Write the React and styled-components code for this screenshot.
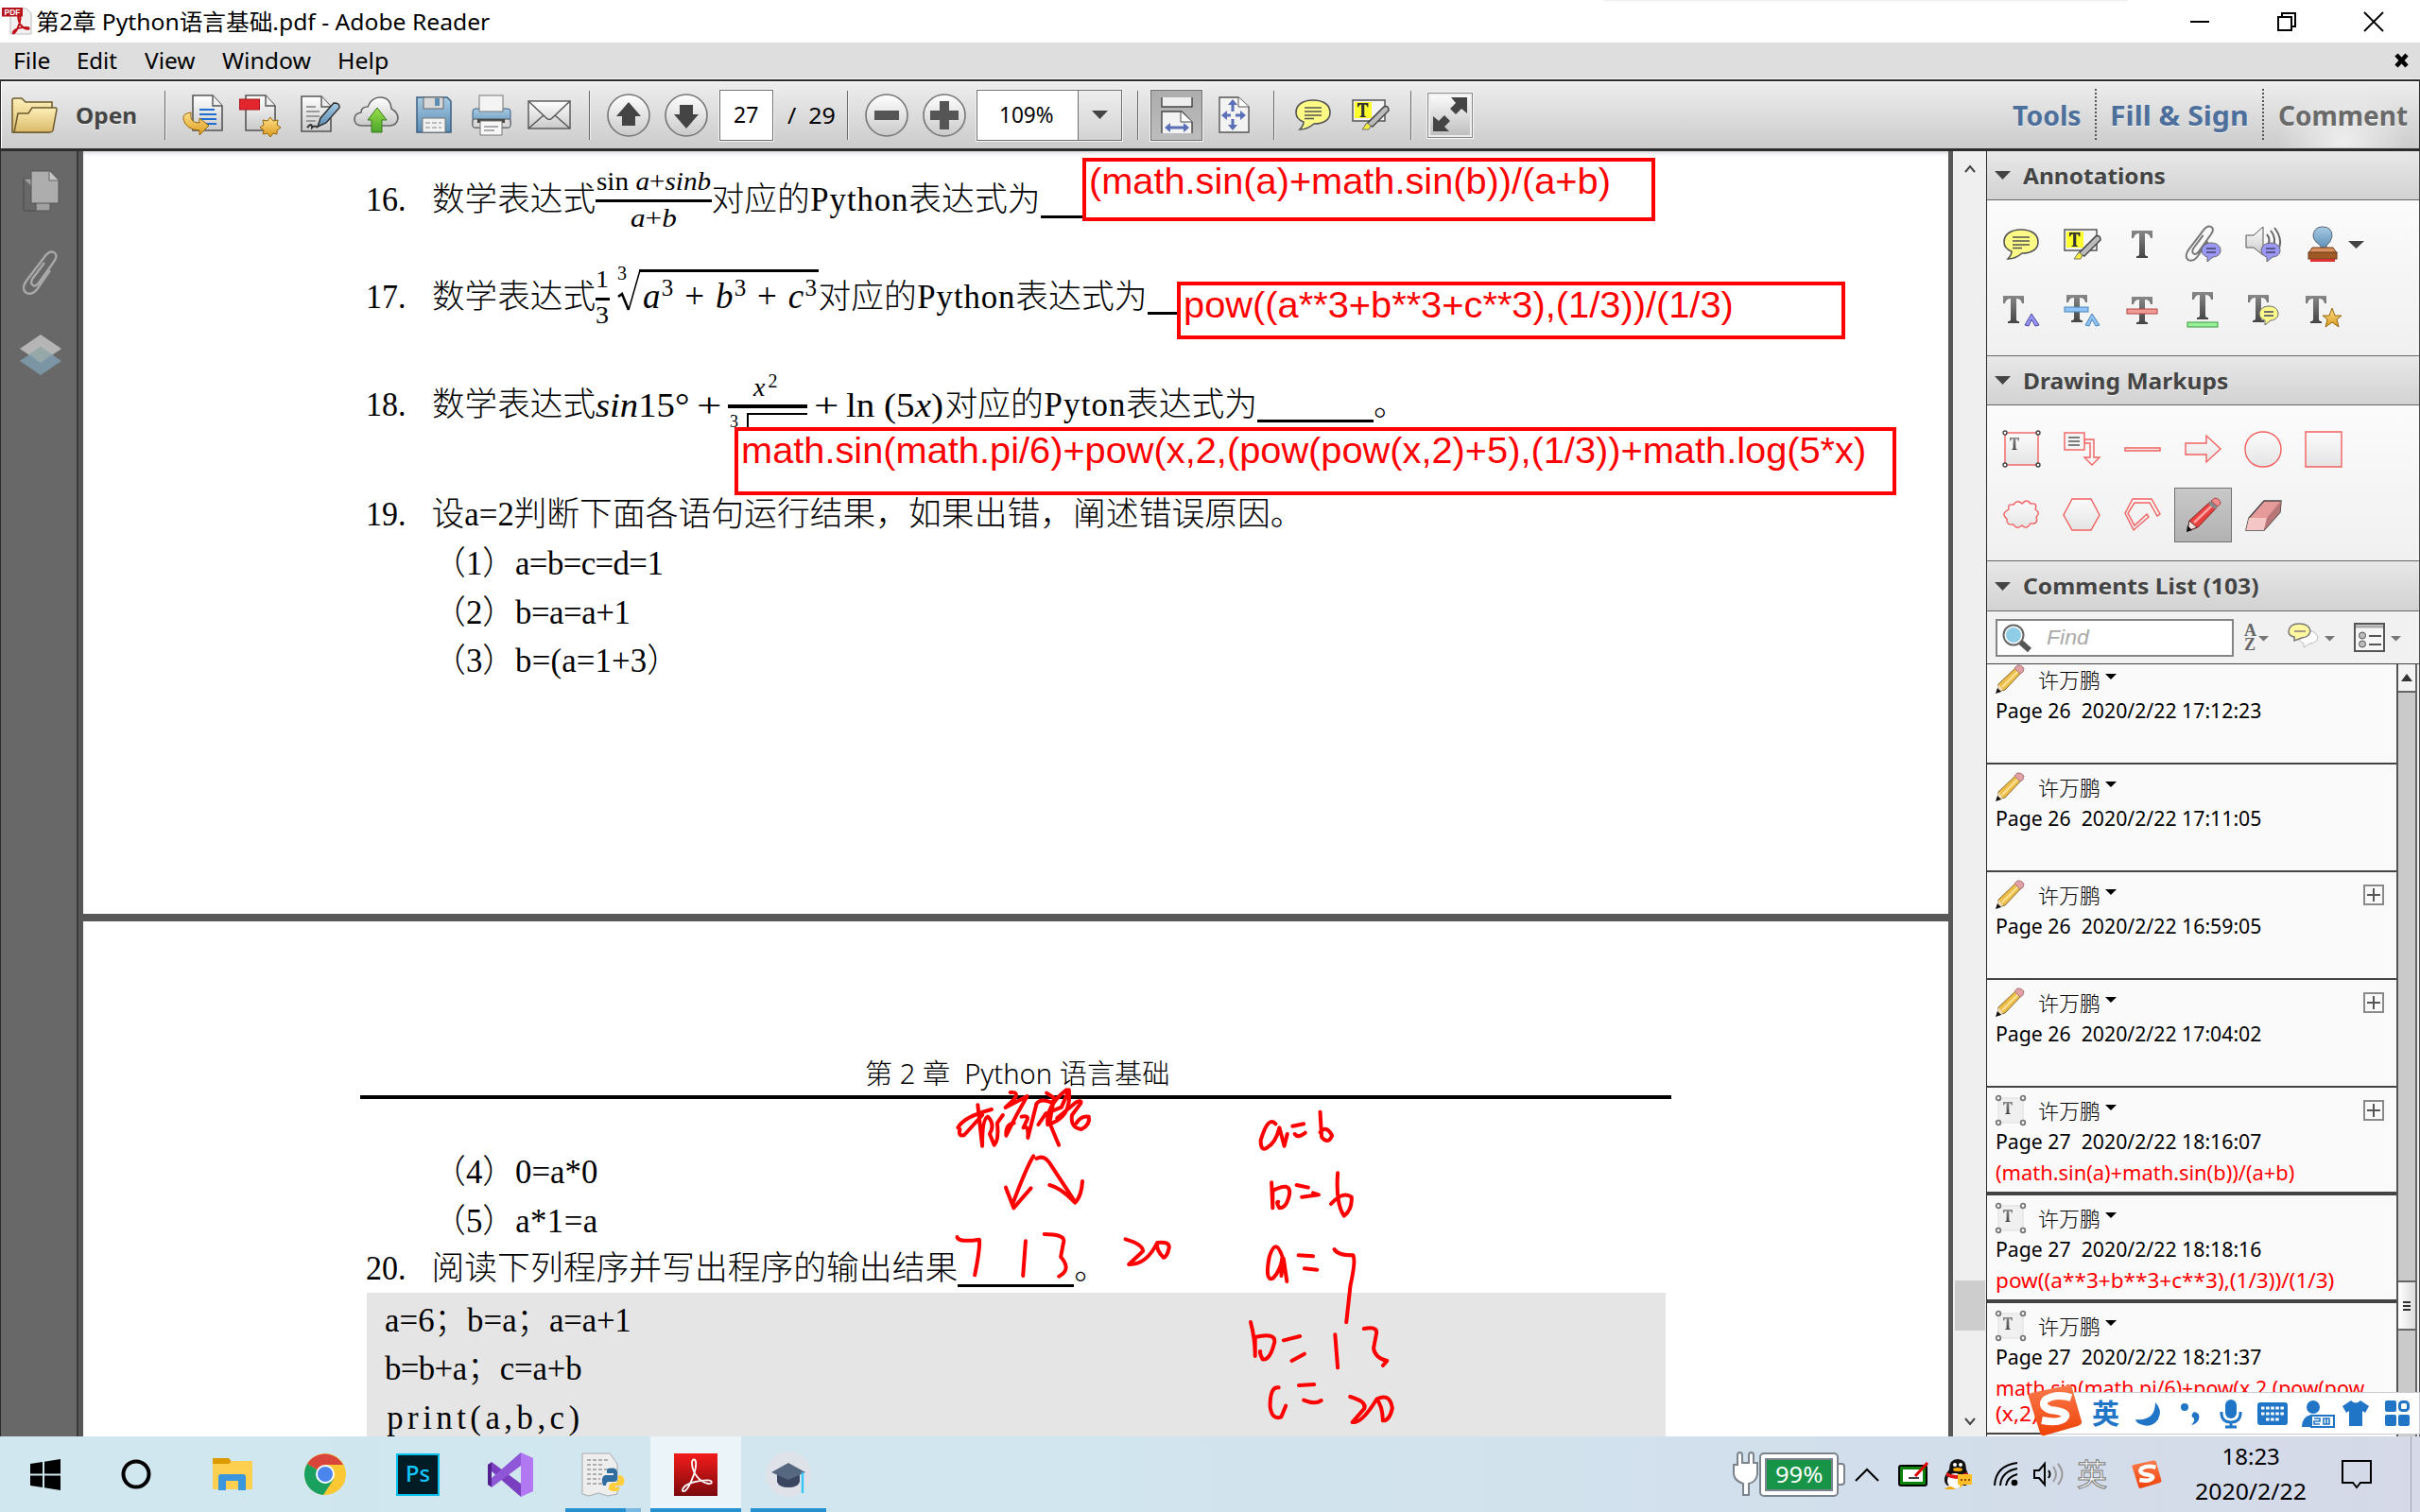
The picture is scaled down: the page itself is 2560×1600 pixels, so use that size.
import React, { useLayoutEffect, useRef, useState } from "react";
import styled, { createGlobalStyle, css } from "styled-components";

const UI = `"Noto Sans", "Noto Sans CJK SC", sans-serif`;
const SONG = `"Liberation Serif", "Noto Sans CJK SC", serif`;
const ARIAL = `"Liberation Sans", "Noto Sans CJK SC", sans-serif`;

const Global = createGlobalStyle`
  html, body { margin: 0; padding: 0; background: #fff; }
  * { box-sizing: border-box; }
  svg { display: block; flex: none; overflow: visible; }
`;

/* ---------- text that fills a known measure ---------- */
const FitBox = styled.span`
  display: inline-block;
  flex: none;
  width: ${(p) => p.$w}px;
  margin-left: ${(p) => p.$ml || 0}px;
  white-space: pre;
  line-height: 1;
`;
const FitInner = styled.span`
  display: inline-block;
  transform-origin: 0 50%;
`;
function Fit({ w, ml, children, className }) {
  const ref = useRef(null);
  const [k, setK] = useState(1);
  useLayoutEffect(() => {
    if (ref.current && ref.current.offsetWidth) setK(w / ref.current.offsetWidth);
  }, [w, children]);
  return (
    <FitBox $w={w} $ml={ml} className={className}>
      <FitInner ref={ref} style={{ transform: `scaleX(${k})` }}>{children}</FitInner>
    </FitBox>
  );
}

/* Latin run whose characters each take half an em on average */
const HalfRun = styled.span`
  display: inline-block;
  white-space: pre;
  width: ${(p) => p.$n * 0.5}em;
`;
function Half({ children }) {
  const ref = useRef(null);
  const [gap, setGap] = useState(0);
  const n = children.length;
  useLayoutEffect(() => {
    const el = ref.current;
    const size = parseFloat(getComputedStyle(el).fontSize);
    setGap((n * 0.5 * size - el.offsetWidth) / n);
  }, [n]);
  return (
    <HalfRun $n={n}>
      <span style={{ letterSpacing: gap, marginLeft: Math.max(0, gap / 2) }}>
        <span ref={ref} style={{ display: "inline-block" }}>{children}</span>
      </span>
    </HalfRun>
  );
}
const SongText = styled.span`
  flex: none;
  line-height: 1;
  white-space: pre;
  margin-left: ${(p) => p.$ml || 0}px;
`;
function Song({ children, ml }) {
  const runs = children.split(/([\x20-\x7e]+)/).filter(Boolean);
  return (
    <SongText $ml={ml}>
      {runs.map((r, i) => (/^[\x20-\x7e]/.test(r) ? <Half key={i}>{r}</Half> : <React.Fragment key={i}>{r}</React.Fragment>))}
    </SongText>
  );
}

/* ---------- frame ---------- */
const Screen = styled.div`
  width: 2560px;
  height: 1600px;
  overflow: hidden;
  display: flex;
  flex-direction: column;
  font-family: ${UI};
  font-size: 24px;
  color: #000;
  position: relative;
`;
const TitleBar = styled.header`
  height: 45px;
  display: flex;
  align-items: center;
  padding-left: 2px;
  background: #fff;
`;
const TopShade = styled.div`
  position: absolute;
  left: 1697px;
  top: 0;
  width: 554px;
  height: 1px;
  background: #f0f0f0;
  box-shadow: 0 0 4px #e4e4e4;
`;
const WindowButtons = styled.div`
  margin-left: auto;
  display: flex;
  align-items: center;
  gap: 72px;
  padding-right: 39px;
`;
const MenuBar = styled.nav`
  height: 41px;
  display: flex;
  align-items: center;
  background: #dedede;
  border-bottom: 2px solid #2e2b2d;
  box-shadow: inset 0 -1px 0 #f4f4f4;
  padding: 0 12px 2px 14px;
`;
const MenuClose = styled.div`
  margin-left: auto;
`;
const ToolBar = styled.div`
  height: 74px;
  display: flex;
  align-items: center;
  background: linear-gradient(#eeeeee, #cbcbcb);
  border-bottom: 3px solid #2e2b2d;
  border-left: 1px solid #2e2b2d;
  border-right: 1px solid #2e2b2d;
  box-shadow: inset 0 1px 0 #fff, inset 1px 0 0 #fff;
`;
const Slot = styled.div`
  flex: none;
  width: ${(p) => p.$w}px;
  margin-left: ${(p) => p.$ml || 0}px;
  display: flex;
  align-items: center;
`;
const Sep = styled.div`
  flex: none;
  width: 2px;
  height: 52px;
  margin-left: ${(p) => p.$ml}px;
  border-left: 1px solid #6a6a6a;
  border-right: 1px solid #efefef;
`;
const DotSep = styled.div`
  flex: none;
  width: 2px;
  height: 56px;
  margin-left: ${(p) => p.$ml}px;
  background: repeating-linear-gradient(#555 0 2px, transparent 2px 4px);
`;
const BoldLabel = styled(Fit)`
  font-weight: 700;
  font-size: ${(p) => p.size || 24}px;
  color: ${(p) => p.color || "#444"};
  text-shadow: 0 1px 0 rgba(255, 255, 255, 0.7);
`;
const Field = styled.div`
  flex: none;
  width: ${(p) => p.$w}px;
  height: 54px;
  margin-left: ${(p) => p.$ml}px;
  display: flex;
  align-items: center;
  background: #fff;
  border: 1px solid #707070;
  outline: 1px solid #f4f4f4;
  font-size: 23px;
  padding-left: ${(p) => p.$pl}px;
`;
const Drop = styled.div`
  margin-left: auto;
  width: 46px;
  height: 100%;
  display: flex;
  align-items: center;
  justify-content: center;
  background: linear-gradient(#eee, #d4d4d4);
  border-left: 1px solid #707070;
`;
const Pressed = styled.div`
  flex: none;
  width: ${(p) => p.$w}px;
  height: ${(p) => p.$h}px;
  margin-left: ${(p) => p.$ml || 0}px;
  display: flex;
  align-items: center;
  justify-content: center;
  background: linear-gradient(#adadad, #bdbdbd);
  border: 1px solid #707070;
  outline: 1px solid #f6f6f6;
`;
const FullScreen = styled(Pressed)`
  background: linear-gradient(#fdfdfd, #bdbdbd);
  border-color: #8a8a8a;
  box-shadow: inset 0 0 0 2px #eee;
`;
const CommentTab = styled.div`
  flex: none;
  margin-left: 4px;
  width: 162px;
  height: 68px;
  padding-left: 11px;
  display: flex;
  align-items: center;
  background: radial-gradient(ellipse 70px 60px at 80px 62px, #eeeeee, rgba(230, 230, 230, 0));
`;

const Body = styled.div`
  height: 1360px;
  display: flex;
`;
const SideBar = styled.aside`
  flex: none;
  width: 88px;
  background: #686868;
  border-left: 1px solid #2e2b2d;
  border-right: 5px solid #575757;
  box-shadow: inset -2px 0 0 #3a3a3a;
  display: flex;
  flex-direction: column;
  align-items: center;
  gap: 42px;
  padding: 20px 1px 0 3px;
`;

/* ---------- document ---------- */
const Doc = styled.main`
  flex: none;
  position: relative;
  width: 1978px;
  height: 1360px;
  overflow: hidden;
  background: #fff;
  border-right: 5px solid #575757;
  box-shadow: inset 0 4px 4px -2px #d8d6dc;
  font-family: ${SONG};
  font-size: 34.8px;
  font-weight: 300;
`;
const PageOne = styled.section`
  height: 807px;
  padding-top: 2px;
`;
const PageGap = styled.div`
  height: 8px;
  background: #575757;
`;
const PageTwo = styled.section`
  padding-top: 140px;
`;
const Line = styled.div`
  display: flex;
  align-items: center;
  height: ${(p) => p.$h || 51.6}px;
  margin-top: ${(p) => p.$mt || 0}px;
  padding-left: ${(p) => p.$pl || 299}px;
`;
const No = styled(Fit).attrs({ w: 43 })`
  margin-right: 26.5px;
`;
const Blank = styled.span`
  flex: none;
  width: ${(p) => p.$w}px;
  height: 36px;
  border-bottom: 3px solid #000;
`;
const PageHead = styled.div`
  height: 48px;
  width: 1387px;
  margin-left: 293px;
  padding-left: 534px;
  padding-top: 6px;
  display: flex;
  align-items: flex-start;
  border-bottom: 4px solid #000;
  font-family: ${UI};
  font-size: 29px;
`;
const CodeBox = styled.div`
  width: 1374px;
  height: 160px;
  margin-left: 300px;
  padding-top: 4px;
  background: #e5e5e5;
`;
const Frac = styled.span`
  flex: none;
  display: flex;
  flex-direction: column;
  align-items: center;
  width: ${(p) => p.$w}px;
  height: ${(p) => p.$h}px;
  transform: translateY(${(p) => p.$dy || 0}px);
  font-weight: 400;
`;
const Bar = styled.span`
  flex: none;
  width: 100%;
  height: 3px;
  margin: ${(p) => p.$m};
  background: #000;
`;
const MathText = styled(Fit)`
  font-size: ${(p) => p.size || 34}px;
  font-weight: 400;
`;
const Note = styled.div`
  position: absolute;
  left: ${(p) => p.$x}px;
  top: ${(p) => p.$y}px;
  width: ${(p) => p.$w}px;
  height: ${(p) => p.$h}px;
  border: 4px solid #f00;
  background: #fff;
  color: #f00;
  font-family: ${ARIAL};
  font-size: 38.5px;
  font-weight: 400;
  padding: 1.5px 0 0 3px;
  line-height: 1;
`;
const Ink = styled.svg`
  position: absolute;
  left: 872px;
  top: 940px;
  fill: none;
  stroke: #f00;
  stroke-width: 4px;
  stroke-linecap: round;
  stroke-linejoin: round;
  path { vector-effect: non-scaling-stroke; }
`;
const DocScroll = styled.div`
  flex: none;
  width: 35px;
  background: #efefef;
  display: flex;
  flex-direction: column;
  align-items: center;
  padding-top: 14px;
`;
const DocThumb = styled.div`
  width: 32px;
  height: 53px;
  margin: 1172px 0 92px;
  background: #cdcdcd;
`;

/* ---------- right panel ---------- */
const Panel = styled.aside`
  flex: none;
  width: 459px;
  height: 1360px;
  border-left: 1px solid #2e2b2d;
  border-right: 1px solid #4a4a4a;
  background: #f2f2f2;
  display: flex;
  flex-direction: column;
  overflow: hidden;
`;
const PanelHead = styled.div`
  flex: none;
  height: ${(p) => p.$h}px;
  display: flex;
  align-items: center;
  gap: 13px;
  padding: 0 0 0 8px;
  background: linear-gradient(#e8e8e8, #d2d2d2);
  border-top: ${(p) => (p.$first ? 0 : 1)}px solid #666;
  border-bottom: 1px solid #666;
  box-shadow: 0 1px 0 #c8c8c8;
`;
const IconArea = styled.div`
  flex: none;
  height: ${(p) => p.$h}px;
  padding: ${(p) => p.$pt}px 0 0 9px;
  background: linear-gradient(#fbfbfb, #f0f0f0);
`;
const IconRow = styled.div`
  display: flex;
  align-items: center;
  height: 54px;
  margin-bottom: ${(p) => p.$mb || 0}px;
`;
const Cell = styled.div`
  flex: none;
  width: 64px;
  margin-left: ${(p) => p.$ml || 0}px;
  display: flex;
  justify-content: flex-start;
  padding-left: 8px;
`;
const CellPressed = styled(Pressed)`
  margin-left: -3px;
  background: linear-gradient(#c8c8c8, #b2b2b2);
`;
const FindRow = styled.div`
  flex: none;
  height: 56px;
  display: flex;
  align-items: center;
  padding: 1px 0 0 9px;
  background: #f1f1f1;
  border-bottom: 1px solid #444;
`;
const FindBox = styled.div`
  width: 252px;
  height: 40px;
  border: 2px solid #858585;
  background: #fff;
  display: flex;
  align-items: center;
  padding-left: 5px;
  color: #aaa;
  font-style: italic;
  font-size: 22px;
  font-family: ${ARIAL};
`;
const ListWrap = styled.div`
  flex: 1;
  min-height: 0;
  display: flex;
`;
const List = styled.div`
  flex: none;
  width: 433px;
  overflow: hidden;
  background: #fafafa;
`;
const Item = styled.article`
  height: ${(p) => p.$h || 114}px;
  padding: 8px 13px 0 9px;
  border-bottom: ${(p) => (p.$thick ? 4 : 2)}px solid #444;
  margin-top: ${(p) => p.$mt || 0}px;
  font-size: 22px;
`;
const ItemTop = styled.div`
  display: flex;
  align-items: center;
  height: 31px;
`;
const Author = styled(Fit)`
  font-weight: 300;
`;
const ItemLine = styled.div`
  height: 33px;
  display: flex;
  align-items: center;
  color: ${(p) => (p.$red ? "#f00" : "#000")};
  ${(p) => p.$tight && css`height: 22px;`}
`;
const PlusBox = styled.div`
  margin-left: auto;
  width: 22px;
  height: 22px;
  border: 2px solid #8a8a8a;
  display: flex;
  align-items: center;
  justify-content: center;
`;
const ListScroll = styled.div`
  flex: none;
  width: 22px;
  background: #cacaca;
  border-left: 2px solid #555;
  border-right: 2px solid #666;
  display: flex;
  flex-direction: column;
`;
const ScrollBtn = styled.div`
  height: 30px;
  background: #f3f3f3;
  border-bottom: 2px solid #666;
  display: flex;
  align-items: center;
  justify-content: center;
`;
const ScrollThumb = styled.div`
  height: 53px;
  margin-top: 622px;
  background: linear-gradient(90deg, #fff, #ddd);
  border: solid #666;
  border-width: 2px 0;
  display: flex;
  align-items: center;
  justify-content: center;
`;

/* ---------- input method bar ---------- */
const ImeBar = styled.div`
  position: absolute;
  left: 2160px;
  top: 1473px;
  width: 400px;
  height: 45px;
  background: #fff;
  border: 1px solid #c9ced6;
  display: flex;
  align-items: center;
  padding-left: 52px;
  color: #2175c7;
  font-weight: 700;
  font-size: 29px;
`;
const ImeLogo = styled.div`
  position: absolute;
  left: -16px;
  top: -8px;
`;

/* ---------- task bar ---------- */
const TaskBar = styled.footer`
  position: relative;
  height: 80px;
  display: flex;
  background: linear-gradient(90deg, #d0e7ef 0%, #d2e6ef 45%, #d1e0ec 70%, #d5d9e8 100%);
`;
const Task = styled.div`
  flex: none;
  width: ${(p) => p.$w || 96}px;
  height: 80px;
  margin-left: ${(p) => p.$ml || 0}px;
  display: flex;
  align-items: center;
  justify-content: center;
  background: ${(p) => (p.$active ? "#ebf4f8" : "transparent")};
  border-bottom: ${(p) => (p.$run ? 4 : 0)}px solid #2790d0;
  padding-top: ${(p) => (p.$run ? 4 : 0)}px;
`;
const TaskStack = styled.div`
  flex: none;
  width: 16px;
  height: 4px;
  margin-top: 76px;
  background: #79b8e0;
`;
const Tray = styled.div`
  margin-left: auto;
  width: 728px;
  display: flex;
  align-items: center;
`;
const Battery = styled.div`
  width: 84px;
  height: 47px;
  border: 2px solid #7b838c;
  border-radius: 5px;
  background: #fff;
  padding: 4px;
  display: flex;
`;
const Charge = styled.div`
  flex: 1;
  background: #179447;
  border: 2px solid #7b838c;
  color: #fff;
  display: flex;
  align-items: center;
  justify-content: center;
  font-size: 24px;
`;
const BatteryTip = styled.div`
  width: 7px;
  height: 24px;
  border: 2px solid #7b838c;
  border-left: 0;
  border-radius: 0 4px 4px 0;
  background: #fff;
`;
const ImeMode = styled(Fit)`
  font-size: 32px;
  color: #fff;
  -webkit-text-stroke: 1px #777;
`;
const Clock = styled.div`
  width: 118px;
  margin-left: 35px;
  margin-top: -2px;
  display: flex;
  flex-direction: column;
  align-items: center;
  gap: 13px;
  font-size: 24px;
`;
const DesktopEdge = styled.div`
  width: 1px;
  height: 80px;
  margin-left: 41px;
  background: #9da6b8;
`;

/* ---------- icons ---------- */
const Tri = ({ w = 16, h = 9, c = "#444", up }) => (
  <svg width={w} height={h} viewBox="0 0 16 9" preserveAspectRatio="none">
    <path d={up ? "M0 9L8 0L16 9Z" : "M0 0H16L8 9Z"} fill={c} />
  </svg>
);
const DefsSvg = styled.svg`
  position: absolute;
`;
const Defs = () => (
  <DefsSvg width="0" height="0">
    <defs>
      <linearGradient id="g" x1="0" y1="0" x2="0" y2="1"><stop offset="0" stopColor="#fff" /><stop offset="1" stopColor="#c9c9c9" /></linearGradient>
      <linearGradient id="dk" x1="0" y1="0" x2="0" y2="1"><stop offset="0" stopColor="#888" /><stop offset="1" stopColor="#444" /></linearGradient>
      <linearGradient id="fold" x1="0" y1="0" x2="0" y2="1"><stop offset="0" stopColor="#fdf0b8" /><stop offset="1" stopColor="#d9b968" /></linearGradient>
      <linearGradient id="gold" x1="0" y1="0" x2="0" y2="1"><stop offset="0" stopColor="#ffe08a" /><stop offset="1" stopColor="#d99a1c" /></linearGradient>
      <linearGradient id="blue" x1="0" y1="0" x2="0" y2="1"><stop offset="0" stopColor="#a6cbe4" /><stop offset="1" stopColor="#5b8cb4" /></linearGradient>
      <linearGradient id="grn" x1="0" y1="0" x2="0" y2="1"><stop offset="0" stopColor="#9be04a" /><stop offset="1" stopColor="#4ba52a" /></linearGradient>
      <linearGradient id="red" x1="0" y1="0" x2="0" y2="1"><stop offset="0" stopColor="#f51b1b" /><stop offset="1" stopColor="#7a0a0c" /></linearGradient>
      <linearGradient id="sg" x1="0" y1="0" x2="0" y2="1"><stop offset="0" stopColor="#fb7a4c" /><stop offset="1" stopColor="#ee4208" /></linearGradient>
      <linearGradient id="sh" x1="0" y1="0" x2="0" y2="1"><stop offset="0" stopColor="#fbfbfb" /><stop offset="1" stopColor="#e4e4e4" /></linearGradient>
    </defs>
  </DefsSvg>
);
const AcroLoop = ({ stroke, w }) => (
  <path d="M6 29C9 28 16 13 16 5C16 0 12 0 12.500 5C13 12 18 21 27 22.500C31 23 31 19.500 26 19.500C18 19.500 9 22 6 25C3 28 4 30 6 29" fill="none" stroke={stroke} strokeWidth={w} />
);
const PdfIcon = () => (
  <svg width="32" height="29" viewBox="0 0 32 29">
    <path d="M9 1H26L31 6V28H9Z" fill="#f1f1f1" stroke="#bbb" />
    <g transform="translate(9 8) scale(.66)"><AcroLoop stroke="#c1121a" w="3" /></g>
    <rect width="22" height="9.500" fill="#b5121b" />
    <text x="11" y="8" fontSize="8.500" fontWeight="700" fill="#fff" textAnchor="middle" fontFamily="Liberation Sans">PDF</text>
  </svg>
);
const OpenIcon = () => (
  <svg width="49" height="40" viewBox="0 0 49 40">
    <path d="M1 38V4Q1 2 3 2H11L15 6H43V14L40 38Z" fill="url(#fold)" stroke="#6d5a2c" strokeWidth="1.500" />
    <path d="M3 38L7 18H18L22 12H47Q48 12 48 14L44 36Q43 38 41 38Z" fill="url(#fold)" stroke="#6d5a2c" strokeWidth="1.500" />
  </svg>
);
const Sheet = ({ x = 0 }) => (
  <g><path d={`M${x + 1} 1H${x + 22}L${x + 32} 12V38H${x + 1}Z`} fill="url(#g)" stroke="#555" strokeWidth="1.600" /><path d={`M${x + 22} 1V12H${x + 32}`} fill="#eee" stroke="#555" strokeWidth="1.400" /></g>
);
const ExportIcon = () => (
  <svg width="44" height="44" viewBox="0 0 44 44"><Sheet x={10} /><path d="M18 16H34M18 21H36M18 26H36M22 31H36" stroke="#1f6fd1" strokeWidth="2.200" /><path d="M9 19Q0 20 1 26Q3 37 18 38V43L28 33L18 25V30Q7 30 9 19Z" fill="url(#gold)" stroke="#96670c" /></svg>
);
const CreateIcon = () => (
  <svg width="44" height="44" viewBox="0 0 44 44"><Sheet x={6} /><rect x="0.500" y="5" width="21" height="11" fill="#e3262e" stroke="#a8161c" /><path d="M33 24L36 28L41 27L40 32L44 35L40 38L40 42L36 41L33 45L30 41L25 42L26 38L22 35L26 32L25 27L30 28Z" fill="url(#gold)" stroke="#96670c" /></svg>
);
const SignIcon = () => (
  <svg width="44" height="42" viewBox="0 0 44 42"><Sheet /><path d="M6 12H16M6 17H20M6 22H20M6 27H16" stroke="#9a9a9a" strokeWidth="2" /><path d="M7 34Q12 28 12 34Q15 31 18 34" fill="none" stroke="#333" strokeWidth="2" /><path d="M18 33L21 24L35 8Q42 8 41 13L27 29Z" fill="url(#blue)" stroke="#333" strokeWidth="1.500" /></svg>
);
const CloudIcon = () => (
  <svg width="48" height="39" viewBox="0 0 48 39"><path d="M9 31Q1 31 1 24Q1 18 8 17Q8 11 15 11Q19 1 28 1Q39 1 40 13Q47 17 47 23Q46 31 38 31Z" fill="url(#g)" stroke="#666" strokeWidth="1.600" /><path d="M25 12L35 25H30V38H19V25H15Z" fill="url(#grn)" stroke="#3a7a1c" /></svg>
);
const SaveIcon = () => (
  <svg width="38" height="39" viewBox="0 0 38 39"><path d="M1 1H33L37 5V38H1Z" fill="url(#blue)" stroke="#3b5f80" strokeWidth="1.500" /><rect x="8" y="1" width="21" height="12" fill="#d8d8d8" stroke="#666" /><rect x="20" y="2" width="5" height="8" fill="#5f8db2" /><rect x="7" y="23" width="24" height="15" fill="#f2f2f2" stroke="#777" /><path d="M10 28H27M10 33H27" stroke="#aaa" strokeWidth="1.600" strokeDasharray="5 2" /></svg>
);
const PrintIcon = () => (
  <svg width="42" height="44" viewBox="0 0 42 44"><rect x="1" y="15" width="40" height="20" rx="3" fill="url(#blue)" stroke="#3b5f80" /><rect x="1" y="26" width="40" height="9" rx="2" fill="#d9d9d9" stroke="#555" /><rect x="8" y="1" width="25" height="17" fill="#f4f4f4" stroke="#777" /><rect x="6" y="26" width="29" height="4" fill="#444" /><path d="M9 28H32V43H9Z" fill="#f8f8f8" stroke="#777" /><path d="M13 34H28M13 38H24" stroke="#aaa" strokeWidth="2" /></svg>
);
const MailIcon = () => (
  <svg width="46" height="31" viewBox="0 0 46 31"><rect x="1" y="1" width="44" height="29" fill="url(#g)" stroke="#555" strokeWidth="1.400" /><path d="M1 1L20 19Q23 22 26 19L45 1M1 30L17 16M45 30L29 16" fill="none" stroke="#555" strokeWidth="1.400" /></svg>
);
const Round = ({ children }) => (
  <svg width="46" height="46" viewBox="0 0 46 46"><circle cx="23" cy="23" r="22" fill="url(#g)" stroke="#777" strokeWidth="1.600" />{children}</svg>
);
const FitWidthIcon = () => (
  <svg width="34" height="40" viewBox="0 0 34 40"><path d="M1 1V11H33V1" fill="#eee" stroke="#444" strokeWidth="1.400" /><path d="M1 39V16H22L33 27V39" fill="#f3f3f3" stroke="#444" strokeWidth="1.400" /><path d="M21 16V27H33" fill="#fff" stroke="#444" /><path d="M4 33L10 28V31.500H24V28L30 33L24 38V34.500H10V38Z" fill="#5b6fb8" /></svg>
);
const FitPageIcon = () => (
  <svg width="33" height="39" viewBox="0 0 33 39"><path d="M1 1H21L32 11V38H1Z" fill="#f3f3f3" stroke="#555" strokeWidth="1.400" /><path d="M21 1V11H32" fill="#fff" stroke="#555" /><path d="M15 3L20 9H16.500V16H13.500V9H10ZM15 36L20 30H16.500V24H13.500V30H10ZM3 20L9 15V18.500H13V21.500H9V25ZM29 20L23 15V18.500H18V21.500H23V25Z" fill="#5b6fb8" /></svg>
);
const Bubble = () => (
  <svg width="38" height="33" viewBox="0 0 38 33"><path d="M19 1C30 1 37 6 37 14C37 22 30 26 20 26Q13 32 5 32Q9 28 9 24Q1 21 1 14C1 6 8 1 19 1Z" fill="#fdfb86" stroke="#555" strokeWidth="1.600" /><path d="M10 9H28M10 13H28M10 17H28M10 20.500H20" stroke="#555" strokeWidth="1.500" /></svg>
);
const Slab = ({ x = 0, y = 0, s = 1, c = "url(#dk)" }) => (
  <path transform={`translate(${x} ${y}) scale(${s})`} d="M0 0H22V8H20Q19 3 14 3V25Q14 27 17 27V29H5V27Q8 27 8 25V3Q3 3 2 8H0Z" fill={c} />
);
const Marker = () => (
  <svg width="40" height="33" viewBox="0 0 40 33"><rect x="1" y="1" width="34" height="22" fill="#f4f4f4" stroke="#555" strokeWidth="1.500" /><rect x="3" y="3" width="18" height="17" fill="#ffff2e" /><Slab x={6} y={4} s={0.52} c="#333" /><path d="M34 8Q39 6 39 12L22 29L15 27Z" fill="#bbb" stroke="#444" strokeWidth="1.500" /><path d="M16 25L20 28L18 32L11 32Z" fill="#f5ee3c" stroke="#776" /></svg>
);
const ExpandIcon = () => (
  <svg width="38" height="37" viewBox="0 0 38 37"><path d="M37 0V17L31 12L25 18L19 12L25 6L20 0ZM1 36V20L7 25L13 19L19 25L13 31L18 36Z" fill="#444" /></svg>
);
const TIcon = ({ children, sx = 0, sy = 4 }) => (
  <svg width="40" height="38" viewBox="0 0 40 38"><Slab x={sx} y={sy} />{children}</svg>
);
const PurpleBubble = ({ x, y, c = "#9a98f4" }) => (
  <g transform={`translate(${x} ${y})`}><path d="M10 0C17 0 20 4 20 8C20 13 15 15 12 15L6 20V15Q0 13 0 8C0 4 4 0 10 0Z" fill={c} stroke="#666" /><path d="M5 6H15M5 10H15" stroke="#446" strokeWidth="1.500" /></g>
);
const Clip = ({ c = "#aaa" }) => (
  <path d="M24 12L12 28Q8 34 12 36Q15 38 19 32L34 11Q39 4 34 1Q29 -1 24 6L5 31Q-1 40 5 44Q11 47 17 39L30 20" fill="none" stroke={c} strokeWidth="2.400" />
);
const Pencil = () => (
  <svg width="31" height="31" viewBox="0 0 31 31"><path d="M3 21L22 3L28 8L10 27L2 29Z" fill="#edbd48" stroke="#84682c" /><path d="M7 24L25 6" stroke="#fbe39a" strokeWidth="2" /><path d="M20 4L23 1Q27 0 30 4L29 8L26 10Z" fill="#e2a0a4" stroke="#a77" /><path d="M3 21L8 27L1 30Z" fill="#eedcb8" /><path d="M2 25L6 29L0 31Z" fill="#111" /></svg>
);
const RedPencil = () => (
  <svg width="38" height="38" viewBox="0 0 38 38"><path d="M4 25L26 5L33 11L13 32L2 36Z" fill="#e8403e" stroke="#8f2020" /><path d="M9 27L29 8" stroke="#f9a09c" strokeWidth="2.500" /><path d="M24 7L27 4L34 10L31 13Z" fill="#888" /><path d="M27 4L31 1Q37 2 37 7L34 10Z" fill="#f08c8c" stroke="#a44" /><path d="M4 25L12 32L2 36Z" fill="#f4e0dc" stroke="#533" /><path d="M2 30L7 35L1 37Z" fill="#111" /></svg>
);
const TextBoxIcon = () => (
  <svg width="32" height="32" viewBox="0 0 32 32"><rect x="3" y="3" width="26" height="26" fill="#f0f0f0" stroke="#ddd" /><Slab x={8} y={7} s={0.45} /><g fill="#fff" stroke="#777" strokeWidth="1.800">{[[3, 3], [29, 3], [3, 29], [29, 29]].map(([x, y]) => <circle key={x + "-" + y} cx={x} cy={y} r="2.300" />)}</g></svg>
);
const Outline = ({ w = 38, h = 36, d }) => (
  <svg width={w} height={h} viewBox={`0 0 ${w} ${h}`}><path d={d} fill="url(#sh)" stroke="#f26060" strokeWidth="1.400" /></svg>
);
const SLogo = ({ w, h }) => (
  <svg width={w} height={h} viewBox="0 0 58 54"><path d="M4 8Q0 9 1 12L13 50Q14 54 18 53L53 43Q58 41 57 38L47 3Q46 -1 42 0Z" fill="url(#sg)" /><path d="M46 13Q30 8 19 15Q13 22 24 26Q42 28 40 33Q36 41 15 37" fill="none" stroke="#fff" strokeWidth="8" /></svg>
);

const ITEMS = [
  { icon: "p", page: "Page 26  2020/2/22 17:12:23" },
  { icon: "p", page: "Page 26  2020/2/22 17:11:05" },
  { icon: "p", page: "Page 26  2020/2/22 16:59:05", plus: true },
  { icon: "p", page: "Page 26  2020/2/22 17:04:02", plus: true },
  { icon: "t", page: "Page 27  2020/2/22 18:16:07", plus: true, note: ["(math.sin(a)+math.sin(b))/(a+b)", 316], thick: true },
  { icon: "t", page: "Page 27  2020/2/22 18:18:16", note: ["pow((a**3+b**3+c**3),(1/3))/(1/3)", 358], thick: true },
  { icon: "t", page: "Page 27  2020/2/22 18:21:37", note: ["math.sin(math.pi/6)+pow(x,2,(pow(pow", 390], more: ["(x,2)+5),(1/3))+math.log(5*x)", 300], h: 139 },
];

const STROKES = [
  "M135 280Q150 245 225 222M188 208L200 338M140 285Q135 310 152 303L200 240M200 335Q200 250 215 245Q235 270 220 300L232 335Q245 320 240 265L255 240",
  "M275 168Q300 165 285 190L262 216L320 180Q290 240 264 305Q262 270 285 265M305 245Q325 240 320 255L310 280Q325 270 322 312L345 205",
  "M345 205Q355 185 385 200M372 170L392 185L380 265L405 335M350 270L370 235L412 215M412 215L432 160Q440 250 375 270Q370 210 425 160M400 250L450 200Q470 190 462 205L440 240Q435 280 465 285Q490 270 485 245Q465 240 452 265",
  "M337 370Q320 400 282 520M263 470L284 535L330 472M345 378Q365 365 380 392L448 515M380 462Q410 470 448 518Q465 500 468 450",
  "M133 627Q135 645 192 635Q195 660 180 748M316 640L309 750M366 618Q420 618 418 640L410 690Q440 730 405 752",
  "M583 634Q630 650 630 672L592 714Q640 715 668 645Q700 640 700 660Q695 690 685 692Q665 670 668 645",
  "M985 268Q965 240 945 320Q945 355 960 345Q985 330 995 280L1008 338L1016 300M1030 275L1060 268M1036 300Q1045 315 1064 296M1104 230L1108 310Q1125 335 1136 305Q1120 270 1104 295",
  "M974 454L977 535V480Q1025 450 1022 490Q1015 535 995 535Q985 515 992 515M1041 462L1072 470M1055 500L1100 493L1085 487M1151 424Q1145 520 1168 560Q1190 540 1188 500Q1165 480 1133 522",
  "M1003 690Q985 625 968 690Q955 770 978 758Q1000 730 1003 690L1000 750L1006 695L1015 768M1046 685L1085 688M1062 727L1096 731M1142 666Q1150 685 1192 685Q1200 700 1185 780L1174 898",
  "M918 897Q930 950 930 1005V945Q985 930 982 960Q970 1020 950 1015Q940 990 944 990M1006 955L1050 942M1028 1020L1062 998M1144 937L1151 1042M1221 918Q1255 910 1255 930L1247 980Q1250 1010 1283 1020L1272 1035",
  "M993 1105Q970 1100 970 1165Q975 1210 1000 1198L1012 1163M1047 1098L1088 1095M1060 1145Q1090 1160 1107 1146M1184 1134Q1230 1150 1222 1172L1190 1215Q1215 1220 1255 1142Q1290 1120 1297 1170Q1290 1210 1272 1210Q1270 1160 1255 1142",
];

export default function App() {
  return (
    <Screen>
      <Global />
      <Defs />
      <TitleBar>
        <PdfIcon />
        <Fit w={480} ml={4}>第2章 Python语言基础.pdf - Adobe Reader</Fit>
        <WindowButtons>
          <svg width="20" height="20"><path d="M0 10H20" stroke="#000" strokeWidth="2" /></svg>
          <svg width="20" height="20"><path d="M1 5H15V19H1ZM5 5V1H19V15H15" fill="none" stroke="#000" strokeWidth="2" /></svg>
          <svg width="20" height="20"><path d="M0 0L20 20M20 0L0 20" stroke="#000" strokeWidth="1.800" /></svg>
        </WindowButtons>
      </TitleBar>
      <TopShade />
      <MenuBar>
        <Fit w={39}>File</Fit>
        <Fit w={43} ml={28}>Edit</Fit>
        <Fit w={54} ml={29}>View</Fit>
        <Fit w={94} ml={28}>Window</Fit>
        <Fit w={54} ml={28}>Help</Fit>
        <MenuClose><svg width="15" height="14"><path d="M2 1L13 13M13 1L2 13" stroke="#000" strokeWidth="4.500" /></svg></MenuClose>
      </MenuBar>
      <ToolBar>
        <Slot $w={49} $ml={11}><OpenIcon /></Slot>
        <Slot $w={65} $ml={19}><BoldLabel w={65}>Open</BoldLabel></Slot>
        <Sep $ml={29} />
        <Slot $w={44} $ml={17}><ExportIcon /></Slot>
        <Slot $w={44} $ml={16}><CreateIcon /></Slot>
        <Slot $w={44} $ml={21}><SignIcon /></Slot>
        <Slot $w={48} $ml={12}><CloudIcon /></Slot>
        <Slot $w={38} $ml={18}><SaveIcon /></Slot>
        <Slot $w={42} $ml={21}><PrintIcon /></Slot>
        <Slot $w={46} $ml={17}><MailIcon /></Slot>
        <Sep $ml={19} />
        <Slot $w={46} $ml={17}><Round><path d="M23 9L36 24H30V34H16V24H10Z" fill="#444" /></Round></Slot>
        <Slot $w={46} $ml={15}><Round><path d="M23 37L36 22H30V12H16V22H10Z" fill="#444" /></Round></Slot>
        <Field $w={57} $ml={12} $pl={14}><Fit w={26}>27</Fit></Field>
        <Fit w={51} ml={15}>/  29</Fit>
        <Sep $ml={12} />
        <Slot $w={46} $ml={17}><Round><rect x="10" y="18" width="26" height="10" fill="#555" /></Round></Slot>
        <Slot $w={46} $ml={15}><Round><path d="M18 8H28V18H38V28H28V38H18V28H8V18H18Z" fill="#555" /></Round></Slot>
        <Field $w={154} $ml={11} $pl={23}><Fit w={58}>109%</Fit><Drop><Tri w={17} h={9} /></Drop></Field>
        <Sep $ml={16} />
        <Pressed $w={55} $h={54} $ml={12}><FitWidthIcon /></Pressed>
        <Slot $w={33} $ml={17}><FitPageIcon /></Slot>
        <Sep $ml={25} />
        <Slot $w={38} $ml={21}><Bubble /></Slot>
        <Slot $w={40} $ml={22}><Marker /></Slot>
        <Sep $ml={22} />
        <FullScreen $w={48} $h={48} $ml={16}><ExpandIcon /></FullScreen>
        <BoldLabel w={73} ml={571} size={28} color="#4d6f9b">Tools</BoldLabel>
        <DotSep $ml={14} />
        <BoldLabel w={147} ml={14} size={28} color="#4d6f9b">Fill &amp; Sign</BoldLabel>
        <DotSep $ml={14} />
        <CommentTab><BoldLabel w={137} size={28} color="#6a6a6a">Comment</BoldLabel></CommentTab>
      </ToolBar>

      <Body>
        <SideBar>
          <svg width="39" height="44"><path d="M1 9H14V43H1ZM1 9V43H29V36" fill="#a0a0a0" stroke="#555" /><path d="M9 1H29L38 11V35H9Z" fill="#adadad" stroke="#555" /><path d="M28 1V11H38" fill="#c4c4c4" stroke="#666" /></svg>
          <svg width="41" height="46"><Clip c="#a8a8a8" /></svg>
          <svg width="46" height="44"><path d="M23 0L45 15L23 30L1 15Z" fill="#b5b5b5" /><path d="M23 13L45 28L23 43L1 28Z" fill="#7f9db0" opacity=".85" /><path d="M23 13L34 21L23 30L12 21Z" fill="#96a8a8" /></svg>
        </SideBar>

        <Doc>
          <PageOne>
            <Line $h={101}>
              <No>16.</No>
              <Fit w={173}>数学表达式</Fit>
              <Frac $w={123} $h={67} $dy={-1}>
                <MathText w={121} size={28}>sin <i>a</i>+<i>sinb</i></MathText>
                <Bar $m="5px 0 3px" />
                <MathText w={49} size={28}><i>a</i>+<i>b</i></MathText>
              </Frac>
              <Song>对应的Python表达式为</Song>
              <Blank $w={44} />
            </Line>
            <Line $h={104}>
              <No>17.</No>
              <Fit w={173}>数学表达式</Fit>
              <Frac $w={15} $h={64}>
                <MathText w={14} size={26}>1</MathText>
                <Bar $m="6px 0 3px" />
                <MathText w={14} size={26}>3</MathText>
              </Frac>
              <svg width="221" height="60" viewBox="0 0 221 60">
                <text x="8" y="11" fontSize="20" fontWeight="400" fontFamily="Liberation Serif">3</text>
                <path d="M9 29L13 26L20 43" fill="none" stroke="#000" strokeWidth="2.600" />
                <path d="M20 43L32 1" stroke="#000" strokeWidth="1.500" />
                <path d="M31 1.500H221" stroke="#000" strokeWidth="3" />
                <text x="35" y="41" fontSize="37" fontWeight="400" fontFamily="Liberation Serif" fontStyle="italic" textLength="184">a<tspan dy="-13" fontSize="25" fontStyle="normal">3</tspan><tspan dy="13" fontStyle="normal"> + </tspan>b<tspan dy="-13" fontSize="25" fontStyle="normal">3</tspan><tspan dy="13" fontStyle="normal"> + </tspan>c<tspan dy="-13" fontSize="25" fontStyle="normal">3</tspan></text>
              </svg>
              <Song>对应的Python表达式为</Song>
              <Blank $w={34} />
            </Line>
            <Line $h={124}>
              <No>18.</No>
              <Fit w={173}>数学表达式</Fit>
              <MathText w={99} size={36}><i>sin</i>15°</MathText>
              <MathText w={26} ml={8} size={36}>+</MathText>
              <svg width="96" height="60" viewBox="0 0 96 60">
                <text x="34" y="20" fontSize="28" fontWeight="400" fontFamily="Liberation Serif" fontStyle="italic">x<tspan dy="-9" dx="3" fontSize="20" fontStyle="normal">2</tspan></text>
                <rect x="7" y="29" width="84" height="4" />
                <text x="9" y="53" fontSize="18" fontWeight="400" fontFamily="Liberation Serif">3</text>
                <path d="M28 60V39H91" fill="none" stroke="#000" strokeWidth="2" />
              </svg>
              <MathText w={26} ml={2} size={36}>+</MathText>
              <MathText w={103} ml={8} size={36}>ln (5<i>x</i>)</MathText>
              <Song ml={2}>对应的Pyton表达式为</Song>
              <Blank $w={123} />
              <Fit w={35}>。</Fit>
            </Line>
            <Line $mt={29}><No>19.</No><Song>设a=2判断下面各语句运行结果，如果出错，阐述错误原因。</Song></Line>
            <Line $pl={370}><Song>（1）a=b=c=d=1</Song></Line>
            <Line $pl={370}><Song>（2）b=a=a+1</Song></Line>
            <Line $pl={370}><Song>（3）b=(a=1+3）</Song></Line>
          </PageOne>
          <PageGap />
          <PageTwo>
            <PageHead><Fit w={322}>第 2 章  Python 语言基础</Fit></PageHead>
            <Line $mt={53} $pl={370}><Song>（4）0=a*0</Song></Line>
            <Line $pl={370}><Song>（5）a*1=a</Song></Line>
            <Line $h={49}><No>20.</No><Song>阅读下列程序并写出程序的输出结果</Song><Blank $w={123} /><Fit w={35}>。</Fit></Line>
            <CodeBox>
              <Line $pl={19}><Song>a=6；b=a；a=a+1</Song></Line>
              <Line $pl={19}><Song>b=b+a；c=a+b</Song></Line>
              <Line $pl={19}><Song>print(a,b,c)</Song></Line>
            </CodeBox>
          </PageTwo>
          <Note $x={1057} $y={7} $w={606} $h={67}><Fit w={552}>(math.sin(a)+math.sin(b))/(a+b)</Fit></Note>
          <Note $x={1157} $y={138} $w={707} $h={61}><Fit w={582}>pow((a**3+b**3+c**3),(1/3))/(1/3)</Fit></Note>
          <Note $x={689} $y={292} $w={1229} $h={72}><Fit w={1190}>math.sin(math.pi/6)+pow(x,2,(pow(pow(x,2)+5),(1/3))+math.log(5*x)</Fit></Note>
          <Ink width="620" height="420" viewBox="0 0 1568 1260" preserveAspectRatio="none">
            {STROKES.map((d, i) => <path key={i} d={d} />)}
          </Ink>
        </Doc>

        <DocScroll>
          <svg width="12" height="9"><path d="M1 8L6 2L11 8" fill="none" stroke="#444" strokeWidth="2" /></svg>
          <DocThumb />
          <svg width="12" height="9"><path d="M1 1L6 7L11 1" fill="none" stroke="#444" strokeWidth="2" /></svg>
        </DocScroll>

        <Panel>
          <PanelHead $h={52} $first><Tri w={17} /><BoldLabel w={151}>Annotations</BoldLabel></PanelHead>
          <IconArea $h={164} $pt={19}>
            <IconRow $mb={16}>
              <Cell><Bubble /></Cell>
              <Cell><Marker /></Cell>
              <Cell><TIcon sx={8} sy={5} /></Cell>
              <Cell><svg width="40" height="38"><g transform="scale(.82)"><Clip c="#777" /></g><PurpleBubble x={18} y={18} /></svg></Cell>
              <Cell><svg width="40" height="38"><path d="M1 10H9L19 1V31L9 23H1Z" fill="url(#g)" stroke="#555" /><path d="M23 9Q28 15 23 22M27 5Q35 15 27 26M31 2Q42 16 33 29" fill="none" stroke="#666" strokeWidth="2" /><PurpleBubble x={17} y={18} /></svg></Cell>
              <Cell $ml={2}><svg width="60" height="38"><path d="M16 1Q26 1 26 11Q25 17 20 21V25H14V21Q6 16 6 10Q7 1 16 1Z" fill="url(#blue)" stroke="#567" /><path d="M5 23H27L31 29H1Z" fill="#d98f5e" stroke="#6b3a18" /><rect x="1" y="28" width="30" height="7" fill="#a05a28" stroke="#6b3a18" /><rect x="3" y="35" width="26" height="3" fill="#d33" /><path d="M43 16H60L51.500 24Z" fill="#444" /></svg></Cell>
            </IconRow>
            <IconRow>
              <Cell><TIcon><path d="M23 35L30 23L38 35L34 36L30 29L27 36Z" fill="#9a98f4" stroke="#4442a0" /></TIcon></Cell>
              <Cell><TIcon sx={3} sy={3}><rect x="1" y="16" width="25" height="5" fill="#8fc4f4" stroke="#4784bc" /><path d="M23 35L30 23L38 35L34 36L30 29L27 36Z" fill="#8fc4f4" stroke="#4784bc" /></TIcon></Cell>
              <Cell><TIcon sx={8} sy={5}><rect x="3" y="18" width="32" height="5" fill="#f29a98" stroke="#b04542" /></TIcon></Cell>
              <Cell><TIcon sx={8} sy={0}><rect x="3" y="32" width="32" height="5" fill="#98f098" stroke="#3a9a3a" /></TIcon></Cell>
              <Cell><TIcon sx={3} sy={3}><PurpleBubble x={15} y={15} c="#fbf98a" /></TIcon></Cell>
              <Cell><TIcon><path d="M28 17L31 25L38 25L33 29L35 37L28 32L21 37L23 29L18 25L25 25Z" fill="url(#gold)" stroke="#96670c" /></TIcon></Cell>
            </IconRow>
          </IconArea>
          <PanelHead $h={53}><Tri w={17} /><BoldLabel w={217}>Drawing Markups</BoldLabel></PanelHead>
          <IconArea $h={164} $pt={19}>
            <IconRow $mb={16}>
              <Cell><svg width="38" height="38"><rect x="2" y="2" width="35" height="34" fill="url(#sh)" stroke="#f26060" strokeWidth="1.400" /><Slab x={7} y={7} s={0.45} /><g fill="#fff" stroke="#444" strokeWidth="1.400">{[[2, 2], [37, 2], [2, 36], [37, 36]].map(([x, y]) => <circle key={x + "-" + y} cx={x} cy={y} r="2" />)}</g></svg></Cell>
              <Cell><svg width="38" height="36"><path d="M22 8H32V27H38L30 35L22 27H28V12H22Z" fill="#f4f4f4" stroke="#f26060" strokeWidth="1.400" /><rect x="1" y="1" width="21" height="18" fill="#f4f4f4" stroke="#f26060" strokeWidth="1.400" /><path d="M5 6H17M5 10H17M5 14H17" stroke="#555" strokeWidth="1.500" /></svg></Cell>
              <Cell><Outline d="M1 17H38V20H1Z" /></Cell>
              <Cell><Outline d="M1 12H23V4L38 18L23 32V24H1Z" /></Cell>
              <Cell><Outline d="M19 0C30 0 38 8 38 18.500C38 29 30 37 19 37C8 37 0 29 0 18.500C0 8 8 0 19 0Z" /></Cell>
              <Cell><Outline d="M0 0H38V37H0Z" /></Cell>
            </IconRow>
            <IconRow>
              <Cell><Outline d="M6 12Q4 6 11 7Q15 1 20 6Q25 0 29 6Q37 5 34 12Q40 16 35 20Q38 28 29 27Q25 34 20 29Q14 34 11 28Q3 29 4 22Q-3 17 6 12Z" /></Cell>
              <Cell><Outline d="M9 1H29L38 18L29 34H9L0 18Z" /></Cell>
              <Cell><Outline d="M1 16L9 1H29L38 17L35 19L27 5H11L4 16L11 29L24 17L26 20L10 34Z" /></Cell>
              <CellPressed $w={61} $h={58}><RedPencil /></CellPressed>
              <Cell $ml={6}><svg width="39" height="34"><path d="M1 33L4 20L20 2H38L37 14L20 33Z" fill="#e79a9a" stroke="#444" strokeWidth="1.400" /><path d="M4 20H23L20 33H1Z" fill="#f4c6c6" /><path d="M23 20L38 2L37 14L20 33Z" fill="#b87676" /></svg></Cell>
            </IconRow>
          </IconArea>
          <PanelHead $h={54}><Tri w={17} /><BoldLabel w={250}>Comments List (103)</BoldLabel></PanelHead>
          <FindRow>
            <FindBox>
              <svg width="32" height="31"><path d="M19 19L29 28" stroke="#555" strokeWidth="6" /><circle cx="12" cy="12" r="10.500" fill="#fff" stroke="#666" strokeWidth="2" /><circle cx="12" cy="12" r="8" fill="#8fcde6" /></svg>
              <Fit w={45} ml={15}>Find</Fit>
            </FindBox>
            <svg width="180" height="32" viewBox="0 0 180 32">
              <g fontFamily="Liberation Serif" fontSize="18" fontWeight="700" fill="#666"><text x="11" y="14">A</text><text x="11" y="29">Z</text></g>
              <path d="M26 14H37L31.500 19.500Z M96 14H107L101.500 19.500Z M166 14H177L171.500 19.500Z" fill="#777" />
              <path d="M72 10Q85 5 89 15Q88 22 80 22L74 26V22Q65 18 72 10Z" fill="#fff" stroke="#bbb" />
              <path d="M69 1Q80 1 81 9Q80 15 72 16L64 19V15Q58 14 58 9Q59 1 69 1Z" fill="#fdf8a0" stroke="#777" strokeWidth="1.500" /><path d="M64 9H76" stroke="#a98" strokeWidth="2" />
              <rect x="128" y="1" width="31" height="29" fill="#f6f6f6" stroke="#555" strokeWidth="2" /><path d="M129 4H158" stroke="#aaa" strokeWidth="3" /><path d="M143 14H156M143 23H156" stroke="#555" strokeWidth="2" /><circle cx="136" cy="13.500" r="3.500" fill="#bbb" stroke="#555" /><circle cx="136" cy="22.500" r="3.500" fill="#bbb" stroke="#555" />
            </svg>
          </FindRow>
          <ListWrap>
            <List>
              {ITEMS.map((it, i) => (
                <Item key={i} $thick={it.thick} $mt={i === 0 ? -8 : 0} $h={it.h}>
                  <ItemTop>
                    {it.icon === "p" ? <Pencil /> : <TextBoxIcon />}
                    <Author w={66} ml={it.icon === "p" ? 14 : 13}>许万鹏</Author>
                    <svg width="20" height="20"><path d="M5 4H17L11 10Z" fill="#000" /></svg>
                    {it.plus && <PlusBox><svg width="14" height="14"><path d="M7 0V14M0 7H14" stroke="#555" strokeWidth="2" /></svg></PlusBox>}
                  </ItemTop>
                  <ItemLine><Fit w={281}>{it.page}</Fit></ItemLine>
                  {it.note && <ItemLine $red><Fit w={it.note[1]}>{it.note[0]}</Fit></ItemLine>}
                  {it.more && <ItemLine $red $tight><Fit w={it.more[1]}>{it.more[0]}</Fit></ItemLine>}
                </Item>
              ))}
            </List>
            <ListScroll>
              <ScrollBtn><Tri w={12} h={8} up c="#333" /></ScrollBtn>
              <ScrollThumb><svg width="8" height="10"><path d="M0 1H8M0 5H8M0 9H8" stroke="#333" strokeWidth="1.800" /></svg></ScrollThumb>
            </ListScroll>
          </ListWrap>
        </Panel>
      </Body>

      <TaskBar>
        <Task><svg width="32" height="33"><path d="M0 5L13 3V15.500H0ZM15 2.700L32 0V15.500H15ZM0 17.500H13V30L0 28ZM15 17.500H32V33L15 30.300Z" /></svg></Task>
        <Task><svg width="32" height="32"><circle cx="16" cy="16" r="13.500" fill="none" stroke="#000" strokeWidth="4" /></svg></Task>
        <Task $w={108}><svg width="42" height="36"><path d="M0 1H17L20 5L17 9H0Z" fill="#dc9a00" /><path d="M0 7H17L20 4H42V34H0Z" fill="#ffcf4f" /><path d="M6 35V21Q6 18 9 18H32Q35 18 35 21V35H27V25H14V35Z" fill="#3a96dd" /></svg></Task>
        <Task $w={88}><svg width="44" height="44" viewBox="0 0 44 44"><circle cx="22" cy="22" r="22" fill="#fbc834" /><path d="M22 22L3 11A22 22 0 0 0 20 44L31 27Z" fill="#1aa15f" /><path d="M22 22L3 11A22 22 0 0 1 41 12H22Z" fill="#d9453a" /><circle cx="22" cy="22" r="10" fill="#fff" /><circle cx="22" cy="22" r="8" fill="#4a86ee" /></svg></Task>
        <Task $w={104} $ml={2}><svg width="46" height="45"><rect x="1" y="1" width="44" height="43" fill="#021c26" stroke="#08c0ee" strokeWidth="2" /><text x="23" y="30" fontSize="24" fontWeight="500" fill="#12c8ff" textAnchor="middle" fontFamily="Noto Sans" textLength="26" lengthAdjust="spacingAndGlyphs">Ps</text></svg></Task>
        <Task $w={92}><svg width="48" height="47"><path d="M0 13L4 10L35 33V47L4 20V27L0 34Z" fill="#7a3fc0" /><path d="M0 34L4 37L35 14V0L4 27Z" fill="#8f56d8" /><path d="M0 13L4 11V36L0 34Z" fill="#52218e" /><path d="M35 0L48 6V41L35 47Z" fill="#b178f2" /></svg></Task>
        <Task $w={64} $ml={12} $run><svg width="46" height="47" viewBox="-8 0 46 47"><path d="M1 1H30L38 12V44L28 46L18 43L8 46L1 44Z" fill="#eee" stroke="#aaa" /><path d="M6 8H28M6 13H24M6 18H30M6 23H22M6 28H20M6 33H22" stroke="#999" strokeWidth="1.500" strokeDasharray="4 2" /><path d="M28 17Q38 15 38 21V28Q38 31 34 31H29Q26 31 26 35H23Q20 26 25 24H34V22H27V19Z" fill="#2f6c9f" /><path d="M39 24Q47 24 45 33Q44 36 36 35V37H41Q40 42 34 41Q28 41 29 37Q29 33 33 32Q39 33 39 28Z" fill="#ffce3a" /></svg></Task>
        <TaskStack />
        <Task $w={96} $ml={10} $run $active><svg width="46" height="45"><rect width="46" height="45" fill="url(#red)" /><g transform="translate(4 5) scale(1.200)"><AcroLoop stroke="#fff" w="1.500" /></g></svg></Task>
        <Task $w={80} $ml={10} $run><svg width="48" height="48"><circle cx="24" cy="24" r="24" fill="#dfe2e8" /><path d="M12 24H36V32Q34 38 24 38Q14 38 12 32Z" fill="#3a4560" /><path d="M24 12L42 22L24 30L6 22Z" fill="#56687f" /><path d="M39 22V44" stroke="#35c8f8" strokeWidth="2.500" /></svg></Task>
        <Tray>
          <svg width="29" height="48"><path d="M6 14V4Q6 1 8.500 1Q11 1 11 4V12H18V4Q18 1 20.500 1Q23 1 23 4V12H27V24Q26 32 18 34V46H12V34Q3 31 2 24V14Z" fill="#fff" stroke="#7b838c" strokeWidth="2" /></svg>
          <Battery><Charge><Fit w={50}>99%</Fit></Charge></Battery>
          <BatteryTip />
          <Slot $w={26} $ml={10}><svg width="26" height="15"><path d="M1 14L13 2L25 14" fill="none" stroke="#000" strokeWidth="2" /></svg></Slot>
          <Slot $w={32} $ml={20}><svg width="32" height="25"><rect x="1" y="3" width="29" height="21" rx="2" fill="#0a840a" stroke="#000" strokeWidth="2" /><rect x="5" y="7" width="21" height="13" fill="#fff" /><path d="M18 14L31 0" stroke="#d00" strokeWidth="3" /><path d="M11 16H22" stroke="#000" strokeWidth="1.500" /></svg></Slot>
          <Slot $w={32} $ml={15}><svg width="32" height="32"><path d="M7 11Q7 0 16 0Q25 0 25 11Q30 20 25 28H5Q-2 22 7 11Z" fill="#111" /><ellipse cx="13" cy="23" rx="8" ry="8" fill="#fff" /><path d="M4 14Q14 20 26 14V18Q14 24 4 18Z" fill="#e01818" /><ellipse cx="16" cy="11" rx="5" ry="2" fill="#f5a800" /><circle cx="13" cy="6" r="2" fill="#fff" /><circle cx="19" cy="6" r="2" fill="#fff" /><path d="M2 32Q8 26 14 32Z" fill="#f5a800" /><path d="M16 16H31V27H22L18 31V27H16Z" fill="#ffbe28" /><path d="M19 22H29" stroke="#8a5200" strokeWidth="2" strokeDasharray="2 2" /></svg></Slot>
          <Slot $w={26} $ml={22}><svg width="26" height="26"><path d="M1 25Q2 4 25 1M7 25Q8 10 25 7M13 25Q14 16 25 13" fill="none" stroke="#000" strokeWidth="2" /><circle cx="22" cy="22" r="3.300" /></svg></Slot>
          <Slot $w={32} $ml={16}><svg width="32" height="26"><path d="M1 9H6L12 2V24L6 17H1Z" fill="none" stroke="#000" strokeWidth="2" /><path d="M16 9Q19 13 16 17" fill="none" stroke="#000" strokeWidth="2" /><path d="M21 5Q27 13 21 21M26 2Q35 13 26 24" fill="none" stroke="#999" strokeWidth="2" /></svg></Slot>
          <ImeMode w={32} ml={14}>英</ImeMode>
          <Slot $w={32} $ml={26}><SLogo w={32} h={31} /></Slot>
          <Clock><Fit w={61}>18:23</Fit><Fit w={118}>2020/2/22</Fit></Clock>
          <Slot $w={32} $ml={37}><svg width="32" height="31"><path d="M1 1H31V24H20L16 29L12 24H1Z" fill="none" stroke="#000" strokeWidth="2" /></svg></Slot>
          <DesktopEdge />
        </Tray>
      </TaskBar>

      <ImeBar>
        <ImeLogo><SLogo w={58} h={54} /></ImeLogo>
        <Fit w={29}>英</Fit>
        <svg width="310" height="32" viewBox="0 0 310 32" fill="#2175c7">
          <path d="M38 4Q46 12 41 22Q34 32 22 27Q18 26 17 22Q38 24 38 4Z" />
          <circle cx="69" cy="9" r="4" /><path d="M79 14Q86 15 84 22Q82 27 76 28Q80 24 79 21Q74 18 79 14Z" />
          <rect x="112" y="1" width="12" height="20" rx="6" /><path d="M108 14V17Q109 25 118 25Q127 25 128 17V14M118 25V30M112 30H124" fill="none" stroke="#2175c7" strokeWidth="3" />
          <rect x="146" y="4" width="32" height="24" rx="3" /><path d="M150 10H174M150 16H174M155 22H169" stroke="#fff" strokeWidth="3" strokeDasharray="3.500 1.600" />
          <circle cx="205" cy="9" r="7" /><path d="M193 30Q193 19 203 17L212 18V30Z" /><rect x="203" y="18" width="24" height="12" fill="#fff" stroke="#2175c7" strokeWidth="2" /><path d="M206 21H212V24H206V27H212M216 21H222V27H216ZM219 21V27" fill="none" stroke="#2175c7" strokeWidth="1.600" />
          <path d="M245 2Q250 7 255 2L264 8L260 15L257 13V29H243V13L240 15L236 8Z" />
          <rect x="281" y="2" width="12" height="12" rx="2" /><rect x="281" y="17" width="12" height="12" rx="2" /><rect x="295" y="17" width="12" height="12" rx="2" /><rect x="296.500" y="3.500" width="9" height="9" rx="3" fill="none" stroke="#2175c7" strokeWidth="3" />
        </svg>
      </ImeBar>
    </Screen>
  );
}
